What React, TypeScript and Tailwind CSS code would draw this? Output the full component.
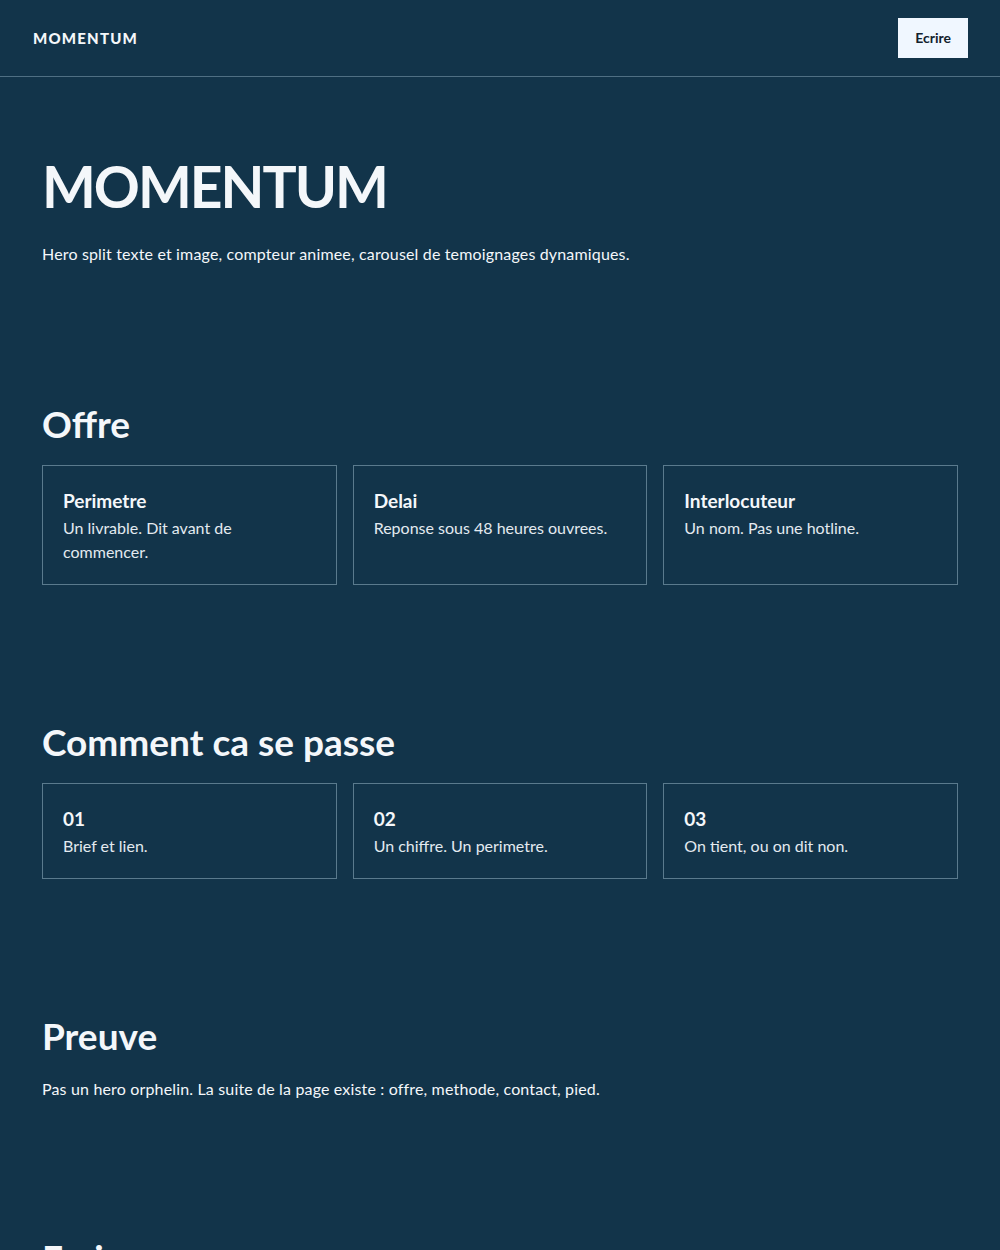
const offre = [
  { title: "Perimetre", text: "Un livrable. Dit avant de commencer." },
  { title: "Delai", text: "Reponse sous 48 heures ouvrees." },
  { title: "Interlocuteur", text: "Un nom. Pas une hotline." },
];

const etapes = [
  { title: "01", text: "Brief et lien." },
  { title: "02", text: "Un chiffre. Un perimetre." },
  { title: "03", text: "On tient, ou on dit non." },
];

function Card({ title, text }: { title: string; text: string }) {
  return (
    <div className="border border-[#5a7a8d] p-5">
      <h3 className="text-[19px] leading-[30px] font-bold text-[#f4f7fa]">{title}</h3>
      <p className="text-base leading-6 text-[#e3eaf0] max-w-[236px]">{text}</p>
    </div>
  );
}

export default function App() {
  return (
    <div
      className="min-h-screen bg-[#12344a] text-[#f4f7fa]"
      style={{ fontFamily: '"Lato", "Noto Sans", sans-serif' }}
    >
      <header className="h-[77px] border-b border-[#4f6f83] px-8 flex items-center justify-between">
        <span className="pl-px text-[15px] font-black tracking-[0.08em]">MOMENTUM</span>
        <button className="h-10 px-[17px] bg-[#f0f7ff] text-[#12212d] text-sm font-bold">
          Ecrire
        </button>
      </header>

      <main className="px-[42px]">
        <section className="pt-[76px] pb-[68px]">
          <h1 className="text-[57px] leading-[66px] font-bold tracking-[-0.035em] mb-[23px]">
            MOMENTUM
          </h1>
          <p className="text-base leading-6 tracking-[0.01em]">
            Hero split texte et image, compteur animee, carousel de temoignages dynamiques.
          </p>
        </section>

        <section className="py-[68px]">
          <h2 className="text-[37px] leading-[43px] font-bold mb-5">Offre</h2>
          <div className="grid grid-cols-3 gap-4">
            {offre.map((c) => (
              <Card key={c.title} {...c} />
            ))}
          </div>
        </section>

        <section className="pt-[67px] pb-[68px]">
          <h2 className="text-[37px] leading-[43px] font-bold mb-5">Comment ca se passe</h2>
          <div className="grid grid-cols-3 gap-4">
            {etapes.map((c) => (
              <Card key={c.title} {...c} />
            ))}
          </div>
        </section>

        <section className="py-[67px]">
          <h2 className="text-[37px] leading-[43px] font-bold mb-5">Preuve</h2>
          <p className="text-base leading-6 tracking-[0.01em]">
            Pas un hero orphelin. La suite de la page existe : offre, methode, contact, pied.
          </p>
        </section>

        <section className="py-[68px]">
          <h2 className="text-[37px] leading-[43px] font-bold mb-5">Ecrire</h2>
          <p className="text-base leading-6 mb-6">Un message, une reponse sous 48 heures.</p>
          <button className="h-10 px-[17px] bg-[#f0f7ff] text-[#12212d] text-sm font-bold">
            Ecrire
          </button>
        </section>
      </main>

      <footer className="border-t border-[#4f6f83] px-8 py-8 text-sm text-[#e3eaf0]">
        MOMENTUM
      </footer>
    </div>
  );
}
